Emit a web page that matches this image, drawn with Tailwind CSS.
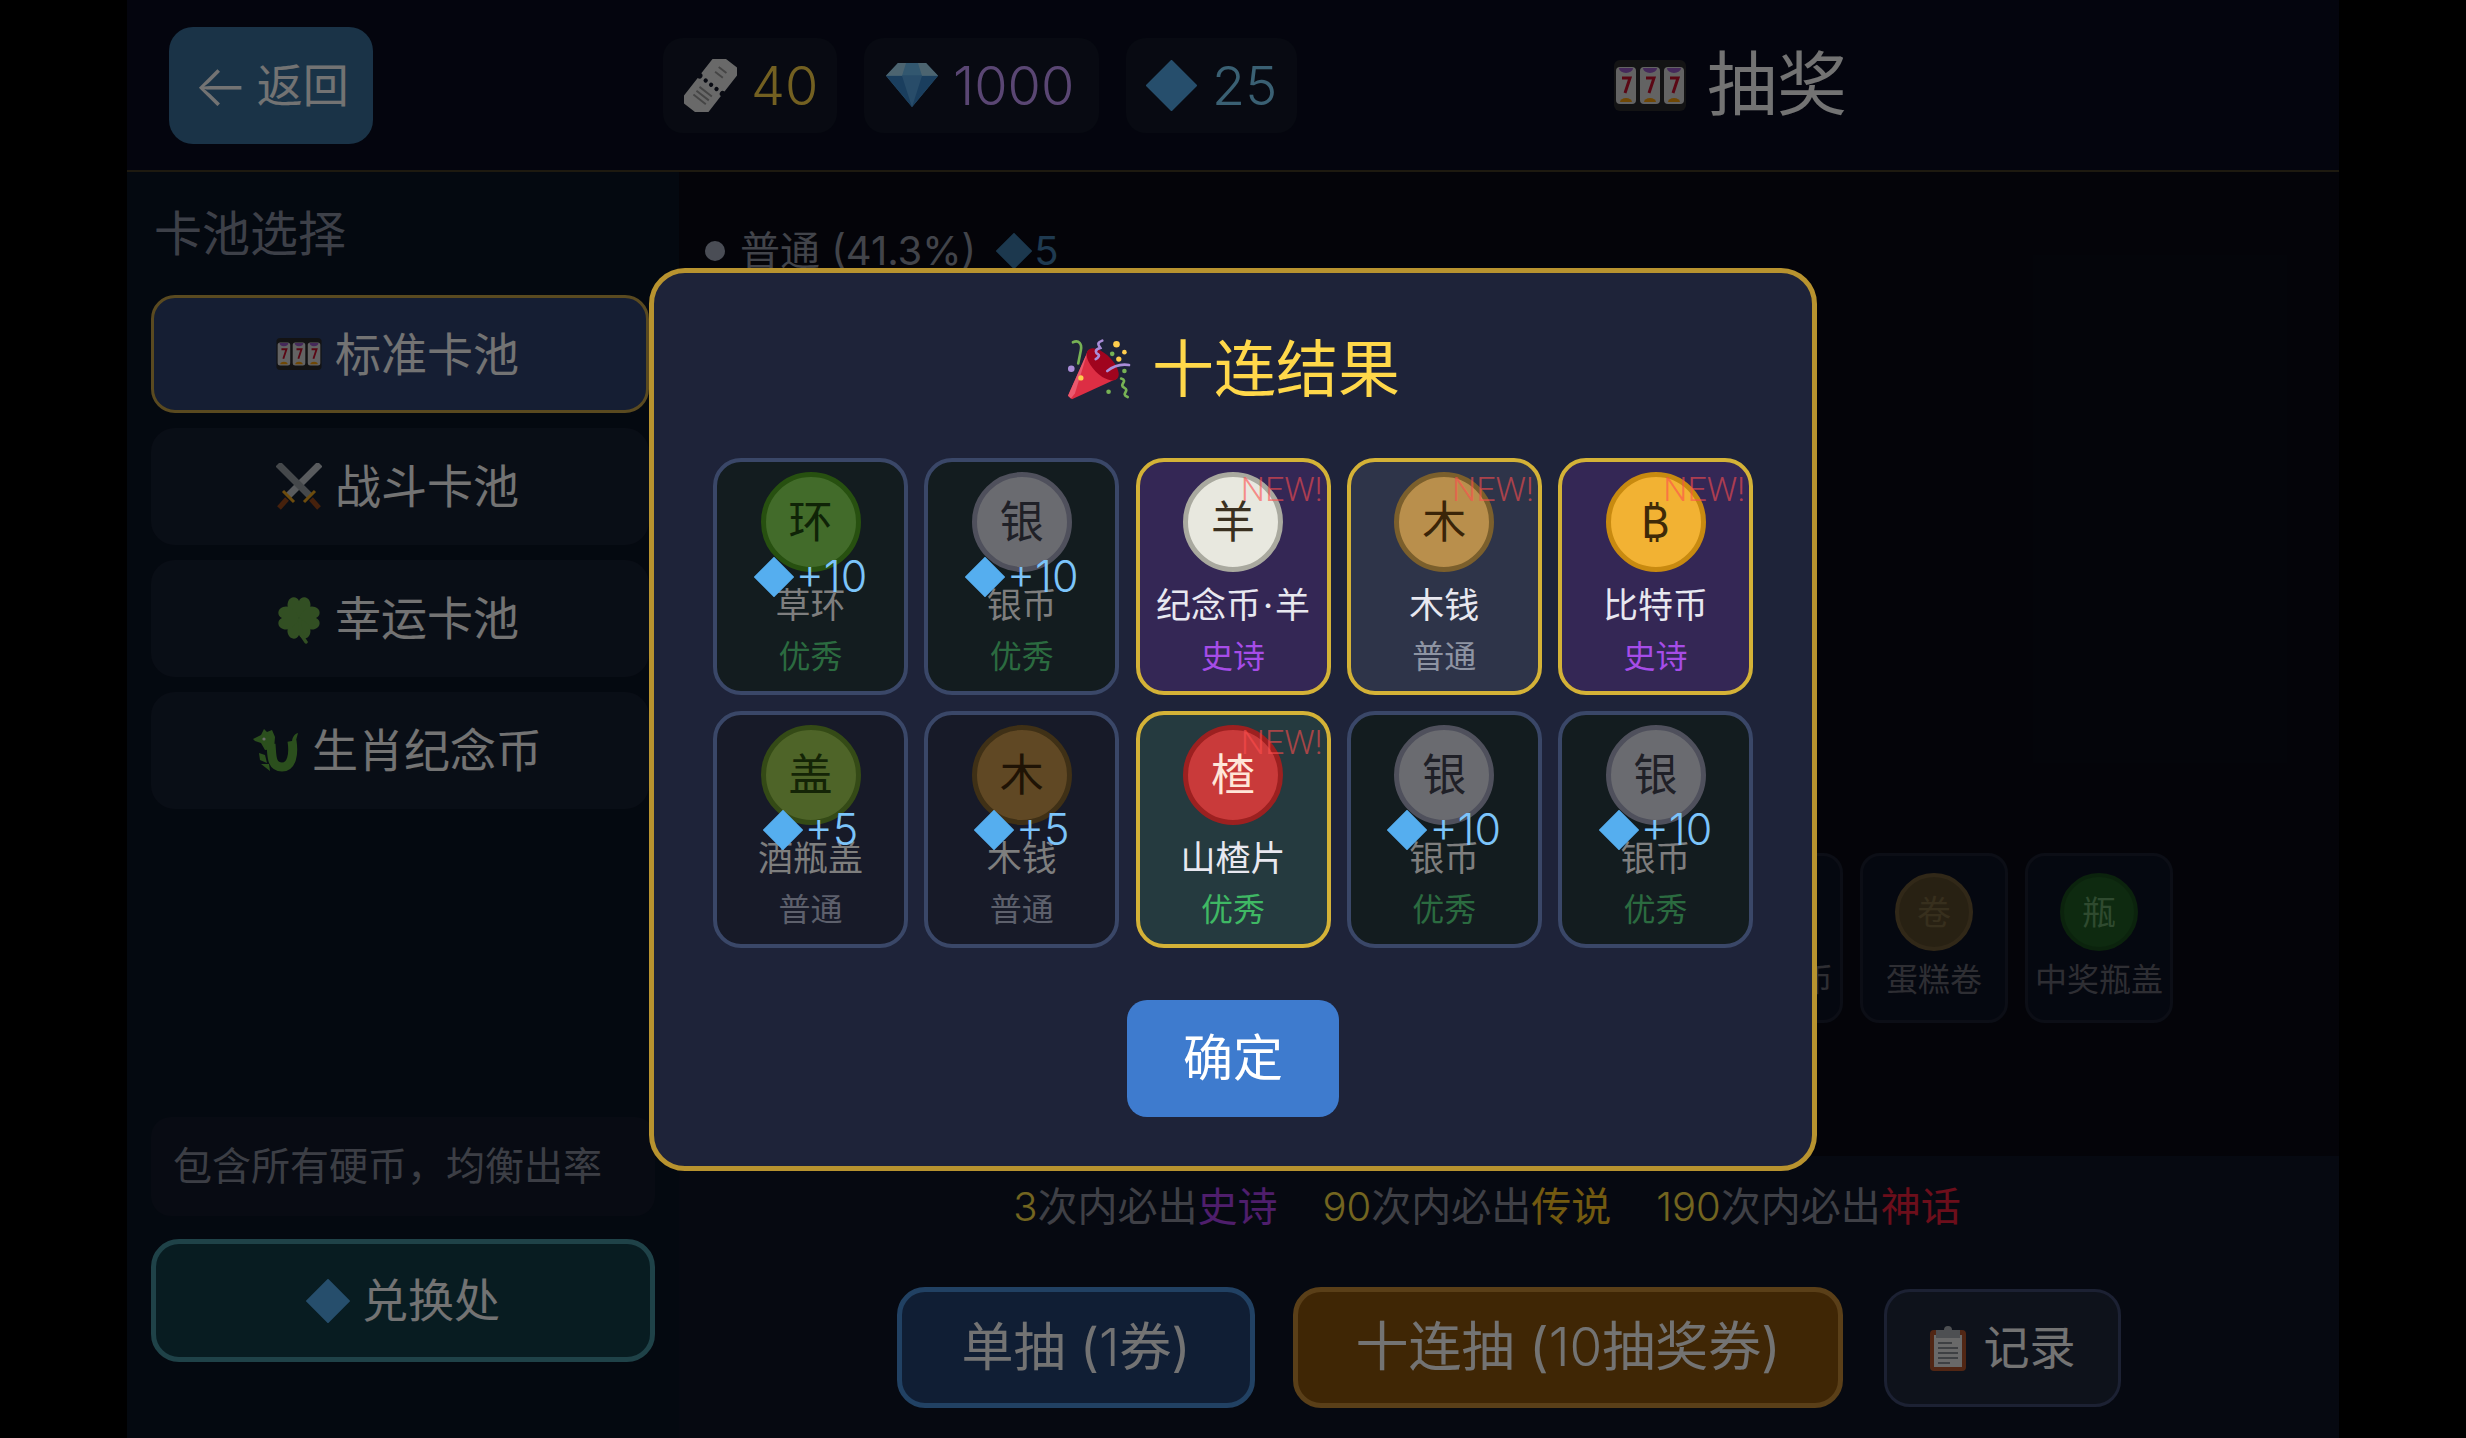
<!DOCTYPE html>
<html lang="zh-CN">
<head>
    <meta charset="UTF-8">
    <meta name="viewport" content="width=device-width, initial-scale=1.0">
    <title>抽奖</title>
    <script src="https://cdn.jsdelivr.net/npm/@tailwindcss/browser@4"></script>
</head>
<body class="bg-black font-['Inter','Noto_Sans_CJK_SC',sans-serif] text-white overflow-hidden">
    <!-- Shared emoji drawings -->
    <svg class="hidden">
        <symbol id="slot" viewBox="0 0 72 51">
            <rect width="72" height="51" rx="6" fill="#2b2b2e"/>
            <g id="reel">
                <rect x="2" y="7" width="20" height="37" rx="4" fill="#dcdcdc"/>
                <path d="M5 8h14a7 5 0 0 1-14 0z" fill="#9a5cc8"/>
                <path d="M6 42a6 4 0 0 1 12 0z" fill="#f59e0b"/>
                <polyline points="8,18 16,18 11,33" fill="none" stroke="#c8102e" stroke-width="3"/>
            </g>
            <use href="#reel" x="24"/>
            <use href="#reel" x="48"/>
        </symbol>
        <symbol id="diamond" viewBox="0 0 50 50">
            <polygon points="25,1 49,25 25,49 1,25" fill="#55aeef" stroke="#55aeef" stroke-width="2" stroke-linejoin="round"/>
        </symbol>
        <symbol id="swords" viewBox="0 0 46 48">
            <g stroke-linecap="butt">
                <path d="M44 1 12 33" stroke="#c6cbd0" stroke-width="7"/>
                <path d="M2 1 34 33" stroke="#9aa0a6" stroke-width="7"/>
                <path d="M7 28l11 11M39 28 28 39" stroke="#f2a81d" stroke-width="3"/>
                <path d="M11 36 3 45M35 36l8 9" stroke="#9c4a1c" stroke-width="5"/>
            </g>
        </symbol>
        <symbol id="clover" viewBox="0 0 46 50">
            <g fill="#6fb04e">
                <path id="leaf" d="M23 24C14 20 10 14 12 8 14 2 21 2 23 7 25 2 32 2 34 8 36 14 32 20 23 24z"/>
                <use href="#leaf" transform="rotate(90 23 24)"/>
                <use href="#leaf" transform="rotate(180 23 24)"/>
                <use href="#leaf" transform="rotate(270 23 24)"/>
            </g>
            <path d="M24 26c0 10 1 16 6 22" fill="none" stroke="#6fb04e" stroke-width="3.5" stroke-linecap="round"/>
        </symbol>
        <symbol id="dragon" viewBox="0 0 46 48">
            <path d="M18 17c1 12 0 23 11 23 10 0 12-13 10-26" fill="none" stroke="#5fb040" stroke-width="9"/>
            <path d="M39 15c0-4 2-8 6-9-1 4-2 6-2 9z" fill="#5fb040"/>
            <path d="M0 12 8 8l3-6 3 3 5-2 3 7-1 12-9 1-4-7-6-2z" fill="#5fb040"/>
            <path d="M12 28 6 26l1 7 7 3zM8 37l8 0 1 7z" fill="#5fb040"/>
            <circle cx="11" cy="12" r="1.6" fill="#eee"/>
        </symbol>
        <symbol id="ticket" viewBox="0 0 54 54">
            <g transform="rotate(38 27 27)">
                <path d="M12 -4h30v27a2.5 2.5 0 0 0 0 6v29H12V29a2.5 2.5 0 0 0 0-6z" fill="#e8e8e8"/>
                <circle cx="20" cy="26" r="2.2" fill="#121828"/><circle cx="27" cy="26" r="2.2" fill="#121828"/><circle cx="34" cy="26" r="2.2" fill="#121828"/>
                <path d="M19 35h16M19 40h16M19 45h16M22 7h10M22 13h10" stroke="#9a9a9a" stroke-width="2"/>
            </g>
        </symbol>
        <symbol id="gem" viewBox="0 0 52 52" preserveAspectRatio="none">
            <polygon points="12,0 40,0 52,15 26,52 0,15" fill="#6fc1f5"/>
            <polygon points="0,15 52,15 26,52" fill="#3b8ad0"/>
            <polygon points="16,15 36,15 26,52" fill="#5aa9e8"/>
            <polygon points="12,0 20,0 16,15 0,15" fill="#a9def9"/>
            <polygon points="40,0 32,0 36,15 52,15" fill="#a9def9"/>
        </symbol>
        <symbol id="clipboard" viewBox="0 0 36 46">
            <rect y="5" width="36" height="41" rx="4" fill="#b4552e"/>
            <rect x="4" y="10" width="28" height="32" fill="#e8e8e8"/>
            <path d="M8 18h14M8 23h20M8 28h20M8 33h20M8 38h12" stroke="#8a8f96" stroke-width="2"/>
            <path d="M6 5h8a4 4 0 0 1 8 0h8v8H6z" fill="#aab0b6"/>
        </symbol>
    </svg>

    <div class="relative w-[2466px] h-[1438px] flex justify-center">
        <div class="w-[2212px] h-full flex flex-col bg-[#0b1424]">
            <!-- Header -->
            <header class="h-[172px] flex items-center pl-[42px] bg-[#090d1f] border-b-2 border-[#433a24]">
                <button class="w-[204px] h-[117px] flex items-center justify-center gap-[8px] rounded-[24px] bg-[#3a719e] text-[46px]">
                    <span class="font-light text-[58px] leading-none">←</span><span>返回</span>
                </button>
                <div class="ml-[290px] flex gap-[27px] text-[54px] font-light">
                    <div class="w-[174px] h-[95px] pl-[21px] flex items-center gap-[14px] rounded-[20px] bg-[#121828] text-[#ffd54a]">
                        <svg class="w-[53px] h-[53px]"><use href="#ticket"/></svg><span>40</span>
                    </div>
                    <div class="w-[235px] h-[95px] pl-[22px] flex items-center gap-[15px] rounded-[20px] bg-[#121828] text-[#c79bff]">
                        <svg class="w-[52px] h-[44px]"><use href="#gem"/></svg><span>1000</span>
                    </div>
                    <div class="w-[171px] h-[95px] pl-[20px] flex items-center gap-[15px] rounded-[20px] bg-[#121828] text-[#81d5ff]">
                        <svg class="w-[51px] h-[51px]"><use href="#diamond"/></svg><span>25</span>
                    </div>
                </div>
                <div class="ml-[317px] flex items-center gap-[21px] text-[70px] leading-none">
                    <svg class="w-[72px] h-[51px]"><use href="#slot"/></svg><span>抽奖</span>
                </div>
            </header>

            <div class="flex-1 flex min-h-0">
                <!-- Pool sidebar -->
                <aside class="w-[552px] px-[24px] pb-[76px] flex flex-col">
                    <h2 class="mt-[32px] mb-[31px] pl-[3px] h-[60px] leading-[60px] text-[48px] font-normal text-[#888ea0]">卡池选择</h2>
                    <div class="mr-[6px] flex flex-col gap-[15px]">
                        <button class="h-[118px] pr-[5px] flex items-center justify-center gap-[13px] rounded-[24px] border-[3px] border-[#c8a447] bg-[#2f4371] text-[46px]">
                            <svg class="w-[46px] h-[32px]"><use href="#slot"/></svg>标准卡池
                        </button>
                        <button class="h-[117px] pr-[5px] flex items-center justify-center gap-[13px] rounded-[24px] bg-[#161f31] text-[46px]">
                            <svg class="w-[46px] h-[48px]"><use href="#swords"/></svg>战斗卡池
                        </button>
                        <button class="h-[117px] pr-[5px] flex items-center justify-center gap-[13px] rounded-[24px] bg-[#161f31] text-[46px]">
                            <svg class="w-[46px] h-[50px]"><use href="#clover"/></svg>幸运卡池
                        </button>
                        <button class="h-[117px] pr-[5px] flex items-center justify-center gap-[13px] rounded-[24px] bg-[#161f31] text-[46px]">
                            <svg class="w-[46px] h-[48px]"><use href="#dragon"/></svg>生肖纪念币
                        </button>
                    </div>
                    <p class="mt-auto h-[99px] px-[22px] flex items-center rounded-[20px] bg-[#121a2a] text-[39px] text-[#858a99] whitespace-nowrap">包含所有硬币，均衡出率</p>
                    <button class="mt-[23px] h-[123px] flex items-center justify-center gap-[12px] rounded-[28px] border-[5px] border-[#4593a0] bg-[#123e4b] text-[46px]">
                        <svg class="w-[44px] h-[44px]"><use href="#diamond"/></svg>兑换处
                    </button>
                </aside>

                <!-- Main area behind the dialog -->
                <main class="flex-1 flex flex-col min-w-0 bg-[#090b16]">
                    <div class="flex-1 flex flex-col justify-between pl-[26px] pt-[59px] pb-[133px]">
                        <div class="flex items-center gap-[15px] text-[40px] leading-none text-[#9397a5]">
                            <span class="w-[20px] h-[20px] rounded-full bg-[#a4abbd]"></span>
                            <span>普通 (41.3%)</span>
                            <span class="ml-[5px] flex items-center gap-[2px] text-[#4581b2]"><svg class="w-[36px] h-[38px] opacity-70"><use href="#diamond"/></svg>5</span>
                        </div>
                        <div id="poolRow" class="flex gap-[17px]"></div>
                    </div>
                    <div class="h-[282px] flex flex-col items-center bg-[#0f1626]">
                        <div class="mt-[28px] mr-[44px] h-[46px] leading-[46px] flex gap-[45px] text-[40px] text-[#8c8e9b]">
                            <span><span class="font-light text-[#ffe047]">3</span>次内必出<span class="text-[#b044f0]">史诗</span></span>
                            <span><span class="font-light text-[#ffe047]">90</span>次内必出<span class="text-[#ffc824]">传说</span></span>
                            <span><span class="font-light text-[#ffe047]">190</span>次内必出<span class="text-[#f01f3c]">神话</span></span>
                        </div>
                        <div class="mt-[57px] flex items-center">
                            <button class="w-[358px] h-[121px] rounded-[28px] border-[5px] border-[#4a90dc] bg-[#244374] text-[52px]">单抽 (<span class="font-light">1</span>券)</button>
                            <button class="ml-[38px] w-[550px] h-[121px] rounded-[28px] border-[5px] border-[#c88c36] bg-[#8c540d] text-[53px]">十连抽 (<span class="font-light">10</span>抽奖券)</button>
                            <button class="ml-[41px] w-[237px] h-[118px] flex items-center justify-center gap-[18px] rounded-[26px] border-[3px] border-[#3e4971] bg-[#1f283c] text-[46px]">
                                <svg class="w-[36px] h-[46px]"><use href="#clipboard"/></svg>记录
                            </button>
                        </div>
                    </div>
                </main>
            </div>
        </div>

        <!-- Result dialog -->
        <div class="absolute inset-0 bg-black/55 flex items-center justify-center">
            <div class="w-[1168px] h-[903px] pt-[66px] flex flex-col items-center rounded-[36px] border-[5px] border-[#b8932f] bg-[#1e2339]">
                <h1 class="h-[62px] flex items-center gap-[20px] text-[62px] font-normal leading-none text-[#ffd84a]">
                    <svg class="w-[66px] h-[65px]" viewBox="195 110 200 195">
                        <path d="M262 150 350 235 213 298 201 287z" fill="#dd2e44"/>
                        <path d="M262 150 222 280 210 295 201 287z" fill="#ea596e"/>
                        <ellipse cx="306" cy="192" rx="30" ry="62" transform="rotate(-45 306 192)" fill="#a0041e"/>
                        <circle cx="240" cy="233" r="8" fill="#ffcc4d"/>
                        <path d="M216 125c18-8 28 5 24 24l-8 40" fill="none" stroke="#77b255" stroke-width="8" stroke-linecap="round"/>
                        <path d="M305 120c-20 8-10 14-6 22-20 6-14 16-6 20 4 3 0 10-8 14" fill="none" stroke="#aa8dd8" stroke-width="8" stroke-linecap="round"/>
                        <path d="M320 212c20-16 40-22 66-18" fill="none" stroke="#aa8dd8" stroke-width="8" stroke-linecap="round"/>
                        <path d="M362 235c24 8-10 18 10 28 18 10-14 18 10 28" fill="none" stroke="#77b255" stroke-width="8" stroke-linecap="round"/>
                        <circle cx="348" cy="131" r="10" fill="#ffcc4d"/><circle cx="372" cy="155" r="7" fill="#ffcc4d"/><circle cx="355" cy="176" r="8" fill="#ffcc4d"/>
                        <circle cx="335" cy="160" r="7" fill="#77b255"/><circle cx="372" cy="212" r="7" fill="#77b255"/><circle cx="324" cy="275" r="7" fill="#77b255"/>
                        <circle cx="211" cy="205" r="10" fill="#aa8dd8"/>
                    </svg>
                    <span>十连结果</span>
                </h1>
                <div id="results" class="mt-[57px] grid grid-cols-[repeat(5,195px)] gap-x-[16.25px] gap-y-[16px]"></div>
                <button class="mt-[52px] w-[212px] h-[117px] rounded-[20px] bg-[#3e7bce] text-[50px] text-white">确定</button>
            </div>
        </div>
    </div>

    <script>
        // Coins drawn in the dialog
        const good = { label: '优秀', dimColor: 'text-[#2b6b40]', color: 'text-[#3fb864]', bg: 'bg-[#253a3f]', dimBg: 'bg-[#131c1f]' };
        const plain = { label: '普通', dimColor: 'text-[#5d606c]', color: 'text-[#8e94a3]', bg: 'bg-[#2e3449]', dimBg: 'bg-[#171a28]' };
        const epic = { label: '史诗', color: 'text-[#a64ce8]', bg: 'bg-[#342755]' };

        const results = [
            { char: '环', name: '草环', rarity: good, refund: 10, coin: 'bg-[#426b2a] border-[#275010] text-[#0f2307]' },
            { char: '银', name: '银币', rarity: good, refund: 10, coin: 'bg-[#6a6b70] border-[#4f505c] text-[#1f2027]' },
            { char: '羊', name: '纪念币<span class="mx-[2px]">·</span>羊', rarity: epic, coin: 'bg-[#e8e8df] border-[#a9a99f] text-[#3a3020]' },
            { char: '木', name: '木钱', rarity: plain, coin: 'bg-[#b98f4c] border-[#7b5f2c] text-[#3a2408]' },
            { char: '₿', name: '比特币', rarity: epic, coin: 'bg-[#f2b233] border-[#c88a10] text-[#3f2a08]' },
            { char: '盖', name: '酒瓶盖', rarity: plain, refund: 5, coin: 'bg-[#4e6428] border-[#344a16] text-[#142406]' },
            { char: '木', name: '木钱', rarity: plain, refund: 5, coin: 'bg-[#604824] border-[#3f3016] text-[#1f1305]' },
            { char: '楂', name: '山楂片', rarity: good, coin: 'bg-[#c93a3a] border-[#9c2020] text-[#ffe6d8]' },
            { char: '银', name: '银币', rarity: good, refund: 10, coin: 'bg-[#6a6b70] border-[#4f505c] text-[#1f2027]' },
            { char: '银', name: '银币', rarity: good, refund: 10, coin: 'bg-[#6a6b70] border-[#4f505c] text-[#1f2027]' },
        ];

        // A refund means a duplicate, anything else is new
        document.getElementById('results').innerHTML = results.map(item => {
            const isNew = !item.refund;
            return `
                <div class="relative h-[237px] pt-[10px] flex flex-col items-center rounded-[28px] border-4 ${isNew ? 'border-[#d4b237] ' + item.rarity.bg : 'border-[#3a4768] ' + item.rarity.dimBg}">
                    <div class="w-[100px] h-[100px] flex items-center justify-center rounded-full border-[5px] text-[44px] ${item.coin}">${item.char}</div>
                    <div class="mt-[11px] h-[44px] leading-[44px] text-[35px] whitespace-nowrap ${isNew ? 'text-[#e8e8f0]' : 'text-[#7e7e7e]'}">${item.name}</div>
                    <div class="mt-[10px] h-[40px] leading-[40px] text-[32px] ${isNew ? item.rarity.color : item.rarity.dimColor}">${item.rarity.label}</div>
                    ${isNew ? `<span class="absolute top-[7px] right-[4px] font-['Roboto'] font-light text-[34px] leading-[40px] text-[#ff4d4d]/60">NEW!</span>` : `
                    <div class="absolute top-[95px] inset-x-0 h-[40px] flex items-center justify-center gap-[2px] text-[43px] font-light leading-none text-[#7cc4fa]">
                        <svg class="w-[40px] h-[40px]"><use href="#diamond"/></svg><span>+${item.refund}</span>
                    </div>`}
                </div>`;
        }).join('');

        // Pool preview row, mostly hidden by the dialog
        const bronze = 'bg-[#5a4a2c] border-[#6e5a36] text-[#7a6840]';
        const pool = [
            { char: '币', name: '铜币', coin: bronze },
            { char: '币', name: '铜币', coin: bronze },
            { char: '币', name: '铜币', coin: bronze },
            { char: '币', name: '硬币', coin: bronze },
            { char: '币', name: '硬币', coin: bronze },
            { char: '币', name: '硬币', coin: bronze },
            { char: '币', name: '纪念硬币', coin: bronze },
            { char: '卷', name: '蛋糕卷', coin: bronze },
            { char: '瓶', name: '中奖瓶盖', coin: 'bg-[#1f5e24] border-[#1a4e1e] text-[#68a468]' },
        ];
        document.getElementById('poolRow').innerHTML = pool.map(item => `
            <div class="w-[148px] h-[170px] shrink-0 pt-[17px] flex flex-col items-center rounded-[20px] border-[3px] border-[#1b2031] bg-[#0d1224]">
                <div class="w-[78px] h-[78px] flex items-center justify-center rounded-full border-[4px] text-[34px] ${item.coin}">${item.char}</div>
                <div class="mt-[9px] text-[32px] leading-[40px] whitespace-nowrap text-[#666672]">${item.name}</div>
            </div>`).join('');
    </script>
</body>
</html>
